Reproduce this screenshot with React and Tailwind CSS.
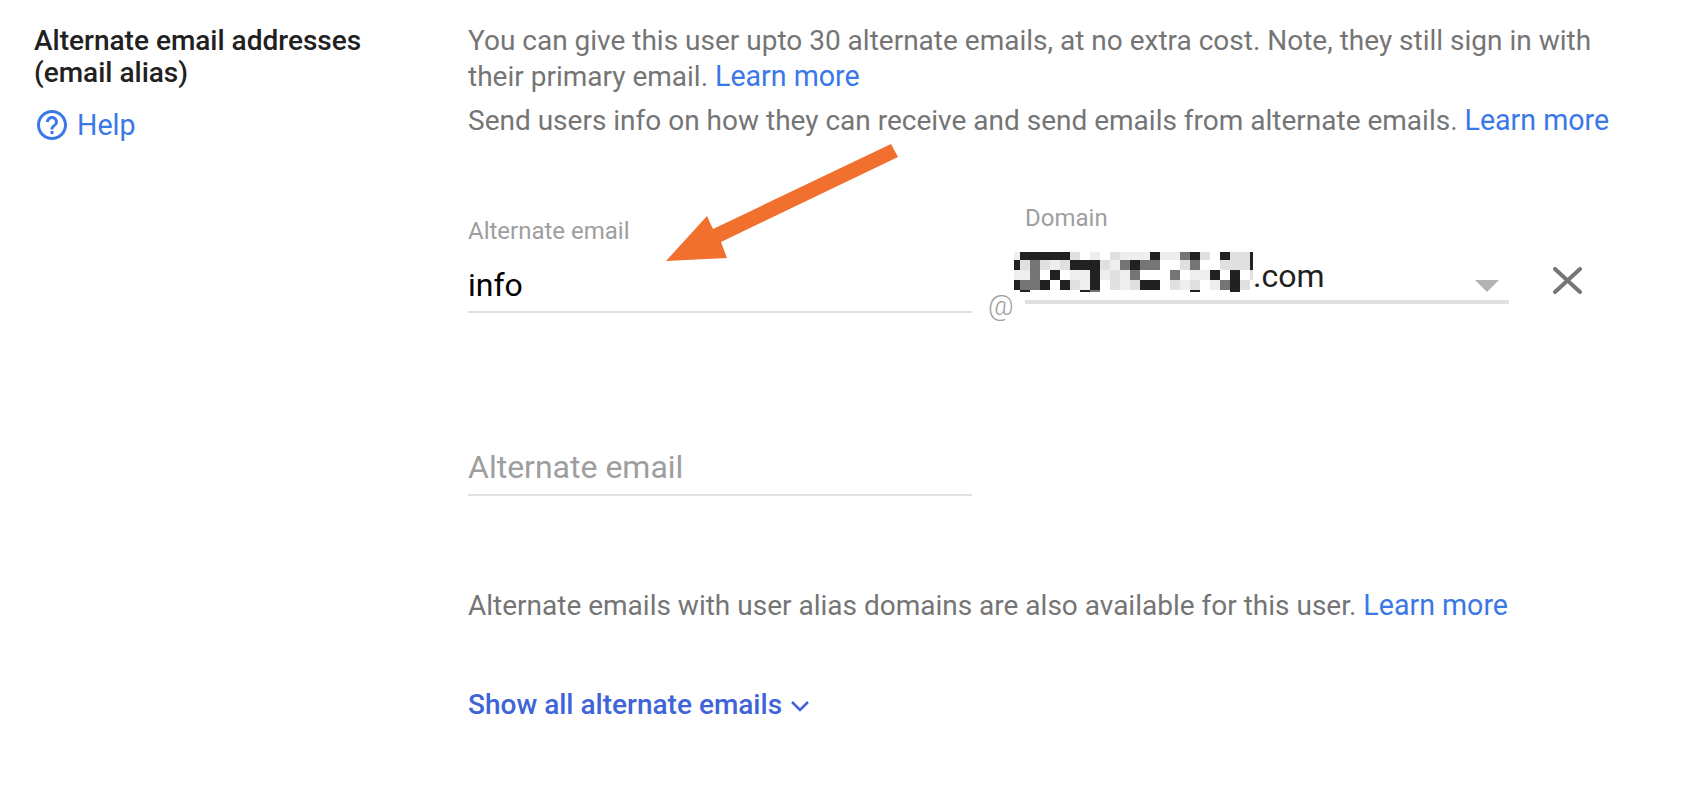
import React from "react";

const cellColors = {
  k: "bg-[#212121]",
  g: "bg-[#757575]",
  l: "bg-[#e0e0e0]",
  v: "bg-[#eeeeee]",
  w: "bg-white",
};

// pixelated block that hides the real domain name, one char per cell
const mosaic = [
  "vkkkkklwvwlvvvkvvgklwkllk",
  "klglvlkkklvgkggwwlgwwlllk",
  "vvgwkwvvkvlvgwwwgwvvkwkwl",
  "kggkwklvkwlvlkkwlvlwvgklw",
  "wkwwwwwkgwwwwwwwwwkwwwkww",
];

function LearnMore() {
  return <a className="text-[28.6px] leading-none text-[#3b78e7]">Learn more</a>;
}

function DomainMosaic() {
  return (
    <div className="ml-[-11px] grid shrink-0 grid-cols-[6px_repeat(23,10px)_3px] grid-rows-[8px_10px_10px_10px_2px]">
      {mosaic.map((row, r) =>
        row.split("").map((c, i) => <div key={`${r}-${i}`} className={cellColors[c]} />)
      )}
    </div>
  );
}

export default function App() {
  return (
    <div className="relative h-[790px] w-[1706px] overflow-hidden bg-white font-['Roboto',sans-serif]">
      <div className="flex pt-[23px]">
        <div className="w-[468px] shrink-0 pl-[34px]">
          <h2 className="mt-[2px] text-[28px] leading-[32px] font-medium text-[#212121]">
            Alternate email addresses
            <br />
            (email alias)
          </h2>
          <a className="mt-[17px] flex items-center gap-[7px] text-[28.6px] leading-[36px] text-[#3b78e7]">
            <svg width="36" height="36" viewBox="0 0 24 24" fill="currentColor">
              <path d="M11 18h2v-2h-2v2zm1-16C6.48 2 2 6.48 2 12s4.48 10 10 10 10-4.48 10-10S17.52 2 12 2zm0 18c-4.41 0-8-3.59-8-8s3.59-8 8-8 8 3.59 8 8-3.59 8-8 8zm0-14c-2.21 0-4 1.79-4 4h2c0-1.1.9-2 2-2s2 .9 2 2c0 2-3 1.75-3 5h2c0-2.25 3-2.5 3-5 0-2.21-1.79-4-4-4z" />
            </svg>
            <span className="mt-[1px]">Help</span>
          </a>
        </div>

        <div className="w-[1200px] text-[28px] text-[#757575]">
          <p className="leading-[36px]">
            You can give this user upto 30 alternate emails, at no extra cost. Note, they still sign in with
            <br />
            their primary email. <LearnMore />
          </p>
          <p className="mt-[8px] leading-[36px]">
            Send users info on how they can receive and send emails from alternate emails. <LearnMore />
          </p>

          <div className="mt-[67px] flex items-start">
            <div className="mt-[13px] w-[504px]">
              <label className="block text-[24px] leading-[24px] text-[#9e9e9e]">Alternate email</label>
              <div className="mt-[24px] border-b-2 border-[#e0e0e0] pb-[8px] text-[32px] leading-[36px] text-black">info</div>
            </div>
            <span className="mt-[82px] ml-[16px] w-[37px] text-[28px] leading-[36px] font-light text-[#9e9e9e]">@</span>
            <div className="w-[484px]">
              <label className="block text-[24px] leading-[24px] text-[#9e9e9e]">Domain</label>
              <div className="mt-[22px] flex h-[52px] items-start border-b-4 border-[#e0e0e0]">
                <DomainMosaic />
                <span className="mt-[6px] text-[32px] leading-[36px] text-[#212121]">.com</span>
                <svg className="mt-[28px] mr-[10px] ml-auto" width="24" height="12" viewBox="0 0 24 12">
                  <path d="M0 0h24L12 12z" fill="#b3b3b3" />
                </svg>
              </div>
            </div>
            <svg className="mt-[61px] ml-[44px]" width="29" height="27" viewBox="0 0 29 27" stroke="#757575" strokeWidth="4" strokeLinecap="round">
              <path d="M2 2l25 23M27 2L2 25" />
            </svg>
          </div>

          <div className="mt-[125px] w-[504px] border-b-2 border-[#e0e0e0] pb-[9px] text-[32px] leading-[36px] text-[#9e9e9e]">
            Alternate email
          </div>

          <p className="mt-[92px] leading-[36px]">
            Alternate emails with user alias domains are also available for this user. <LearnMore />
          </p>

          <a className="mt-[63px] flex items-center gap-[8px] leading-[36px] font-medium text-[#3e64d8]">
            Show all alternate emails
            <svg className="mt-[2px]" width="20" height="13" viewBox="0 0 20 13" fill="none" stroke="currentColor" strokeWidth="2.5">
              <path d="M2 2l8 8 8-8" />
            </svg>
          </a>
        </div>
      </div>

      {/* annotation arrow drawn over the page */}
      <svg className="absolute top-0 left-0" width="1706" height="790" viewBox="0 0 1706 790">
        <polygon points="666,261 707,216 713,229 891,144 898,157 721,242 727,258" fill="#f1702e" />
      </svg>
    </div>
  );
}
